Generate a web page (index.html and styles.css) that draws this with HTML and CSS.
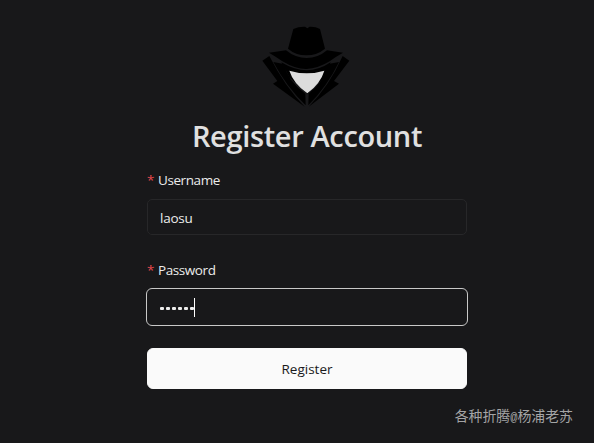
FILE: index.html
```html
<!DOCTYPE html>
<html lang="en">
<head>
<meta charset="utf-8">
<title>Register Account</title>
<link rel="stylesheet" href="styles.css">
</head>
<body>
<main class="register">
  <svg class="logo" viewBox="0 0 300 270" aria-hidden="true">
    <path d="M99 86 115 27Q132 19 150 20L157 25 164 20Q181 19 195 27L210 86Q186 106 154 106T99 86Z"/>
    <path d="M42 98 93 91Q121 114 155 114T216 91L264 98Q242 110 224 124 188 146 155 147T81 123Q61 109 42 98Z"/>
    <path d="M43 108 22 122 67 183 54 191 149 260Q89 199 43 108Z"/>
    <path d="M263 108 283 122 237 183 252 191 161 260Q222 199 263 108Z"/>
    <path d="M55 126 86 132Q99 184 151 221L152 256Q94 200 55 126Z"/>
    <path d="M252 126 220 132Q208 184 161 221L160 256Q216 200 252 126Z"/>
    <path d="M79 127Q119 151 155 151T227 127L208 172 158 222 103 172Z"/>
    <path class="logo-face" d="M103 152Q155 168 208 152 197 190 157 220 115 190 103 152Z"/>
  </svg>
  <h1 class="title">Register Account</h1>
  <form class="form">
    <label class="label" for="username"><span class="required">*</span>Username</label>
    <input class="input" id="username" type="text" value="laosu">
    <label class="label label-password" for="password"><span class="required">*</span>Password</label>
    <div class="input input-focused" id="password"><span class="dots"><i></i><i></i><i></i><i></i><i></i><i></i></span><span class="caret"></span></div>
    <button class="submit" type="button">Register</button>
  </form>
</main>
<div class="watermark">各种折腾<span class="at">@</span>杨浦老苏</div>
</body>
</html>
```
FILE: styles.css
```css
* { box-sizing: border-box; }
body {
  margin: 0;
  height: 443px;
  overflow: hidden;
  background: #18181a;
  color: #ececec;
  font-family: "Open Sans", "Noto Sans", sans-serif;
  font-size: 14px;
}
.register {
  width: 320px;
  margin-left: 147px;
  padding-top: 20px;
  display: flex;
  flex-direction: column;
}
.logo {
  width: 100px;
  height: 90px;
  margin-left: 108px;
  fill: #000;
}
.logo-face { fill: #dcdcdc; }
.title {
  margin: 6px 0 0;
  height: 40px;
  line-height: 40px;
  font-size: 29px;
  font-weight: 600;
  letter-spacing: -0.35px;
  text-align: center;
  white-space: nowrap;
  color: #e0e0e0;
}
.form {
  display: flex;
  flex-direction: column;
  margin-top: 14px;
}
.label {
  height: 20px;
  line-height: 20px;
  font-size: 13.5px;
  letter-spacing: -0.42px;
}
.label-password { margin-top: 25px; }
.required {
  display: inline-block;
  width: 11px;
  color: #e5484d;
}
.input {
  height: 36px;
  margin: 9px 0 0;
  padding: 2px 12px 0;
  border: 1px solid #272729;
  border-radius: 5px;
  outline: none;
  background: #18181a;
  color: #ececec;
  font: inherit;
  font-size: 13.5px;
  letter-spacing: -0.25px;
}
.input-focused {
  display: flex;
  align-items: center;
  height: 38px;
  margin: 8px -1px 0;
  padding: 0 13px;
  border: 1px solid #c8c8c8;
  border-radius: 6px;
}
.dots { display: flex; gap: 2px; }
.dots i {
  width: 4px;
  height: 3px;
  margin-top: 3px;
  border-radius: 1px;
  background: #ececec;
}
.caret {
  width: 1px;
  height: 19px;
  background: #fff;
}
.submit {
  height: 41px;
  margin-top: 22px;
  padding: 0;
  border: 1px solid #fafafa;
  border-radius: 6px;
  background: #fafafa;
  color: #19191b;
  font: 500 13.5px "Open Sans", sans-serif;
  letter-spacing: 0;
}
.watermark {
  position: absolute;
  right: 21px;
  top: 405px;
  line-height: 20px;
  font-family: "Noto Sans CJK SC", sans-serif;
  font-size: 13.9px;
  color: #a4a4a5;
  white-space: nowrap;
}
.at {
  font-family: "Liberation Mono", monospace;
  font-size: 12px;
}
```
